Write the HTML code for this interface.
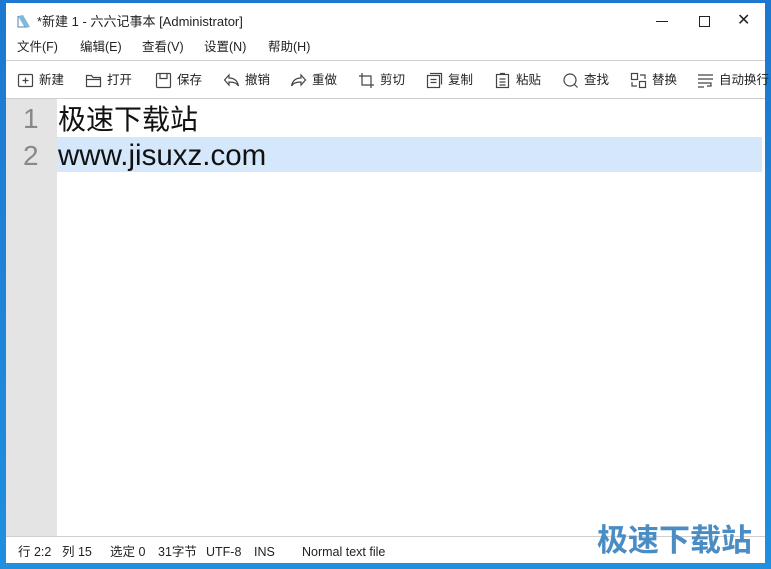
<!DOCTYPE html>
<html><head><meta charset="utf-8"><style>
*{margin:0;padding:0;box-sizing:border-box}
body{width:771px;height:569px;overflow:hidden;background:linear-gradient(#1c78d0,#1f8fe0);position:relative;font-family:"Liberation Sans","Noto Sans CJK SC",sans-serif;line-height:1}
#win{position:absolute;left:6px;top:3px;width:759px;height:560px;background:#fff;}
.t{position:absolute;font-size:13px;color:#222;white-space:nowrap;line-height:1}
.m{position:absolute;top:38px;font-size:12.5px;color:#222;line-height:1}
.tb{position:absolute;top:69px;height:17px;font-size:12.5px;line-height:1;color:#222;display:flex;align-items:center;gap:5px;white-space:nowrap}
.tb svg{width:17px;height:17px;fill:none;stroke:#444;stroke-width:1.2}
.hr{position:absolute;left:0;width:759px;height:1px;background:#cfcfcf}
.s{position:absolute;top:543px;font-size:12.5px;color:#222;white-space:nowrap;line-height:1}
</style></head><body>
<div id="win">
<svg style="position:absolute;left:11px;top:11px" width="14" height="14" viewBox="0 0 14 14"><path d="M1 2l5-1 7 12-5 1z" fill="#7fb8d8"/><path d="M1 2v11h7" stroke="#4a8ab0" fill="none"/></svg>
<div class="t" style="left:31px;top:12px">*新建 1 - 六六记事本 [Administrator]</div>
<div style="position:absolute;left:650px;top:18px;width:12px;height:1.2px;background:#222"></div>
<div style="position:absolute;left:693px;top:13px;width:11px;height:11px;border:1.2px solid #222"></div>
<div class="t" style="left:731px;top:10px;font-size:16px">✕</div>
<div class="m" style="left:11px">文件(F)</div>
<div class="m" style="left:74px">编辑(E)</div>
<div class="m" style="left:136px">查看(V)</div>
<div class="m" style="left:198px">设置(N)</div>
<div class="m" style="left:262px">帮助(H)</div>
<div class="hr" style="top:57px"></div>
<div class="tb" style="left:11px"><svg viewBox="0 0 17 17"><rect x="1.5" y="2.5" width="14" height="12" rx="1"/><path d="M8.5 5.5v6M5.5 8.5h6"/></svg>新建</div>
<div class="tb" style="left:79px"><svg viewBox="0 0 17 17"><path d="M1.5 14.5v-11h5l1.5 2h7.5v9z M1.5 7.5h14"/></svg>打开</div>
<div class="tb" style="left:149px"><svg viewBox="0 0 17 17"><rect x="1.5" y="1.5" width="14" height="14" rx="1"/><path d="M5 1.5v5h7v-5"/></svg>保存</div>
<div class="tb" style="left:217px"><svg viewBox="0 0 17 17"><path d="M6 3L1.5 8 6 13V10c5 0 8 1 9.5 4-1-5-4-8-9.5-8z"/></svg>撤销</div>
<div class="tb" style="left:284px"><svg viewBox="0 0 17 17"><path d="M11 3l4.5 5L11 13V10c-5 0-8 1-9.5 4 1-5 4-8 9.5-8z"/></svg>重做</div>
<div class="tb" style="left:352px"><svg viewBox="0 0 17 17"><path d="M4 1v12h12M1 4h12v12"/></svg>剪切</div>
<div class="tb" style="left:420px"><svg viewBox="0 0 17 17"><rect x="1.5" y="3.5" width="12" height="12"/><path d="M4 1.5h11.5v11M4.5 7.5h6M4.5 10.5h6"/></svg>复制</div>
<div class="tb" style="left:488px"><svg viewBox="0 0 17 17"><rect x="2.5" y="2.5" width="12" height="13"/><path d="M6 1.5h5M5.5 7h6M5.5 10h6M5.5 13h6"/></svg>粘贴</div>
<div class="tb" style="left:556px"><svg viewBox="0 0 17 17"><circle cx="8" cy="8" r="6"/><path d="M12.5 12.5l3 3"/></svg>查找</div>
<div class="tb" style="left:624px"><svg viewBox="0 0 17 17"><rect x="1.5" y="1.5" width="6" height="6"/><rect x="9.5" y="9.5" width="6" height="6"/><path d="M10 3h5v4M7 14H2v-4"/></svg>替换</div>
<div class="tb" style="left:691px"><svg viewBox="0 0 17 17"><path d="M1 3h15M1 7h15M1 11h13v3h-4M1 15h6"/></svg>自动换行</div>
<div class="hr" style="top:95px"></div>
<div style="position:absolute;left:0;top:96px;width:51px;height:437px;background:#e4e4e4"></div>
<div style="position:absolute;left:51px;top:134px;width:705px;height:35px;background:#d5e8fb"></div>
<div class="t" style="left:17px;top:102px;font-size:28px;color:#888">1</div>
<div class="t" style="left:17px;top:139px;font-size:28px;color:#888">2</div>
<div class="t" style="left:52px;top:103px;font-size:28px;color:#111">极速下载站</div>
<div class="t" style="left:52px;top:138px;font-size:29.5px;color:#111">www.jisuxz.com</div>
<div class="hr" style="top:533px"></div>
<div class="s" style="left:12px">行 2:2</div>
<div class="s" style="left:56px">列 15</div>
<div class="s" style="left:104px">选定 0</div>
<div class="s" style="left:152px">31字节</div>
<div class="s" style="left:200px">UTF-8</div>
<div class="s" style="left:248px">INS</div>
<div class="s" style="left:296px">Normal text file</div>
<div class="t" style="left:591px;top:522px;font-size:31px;font-weight:bold;color:#4a8cc4">极速下载站</div>
</div>
</body></html>
